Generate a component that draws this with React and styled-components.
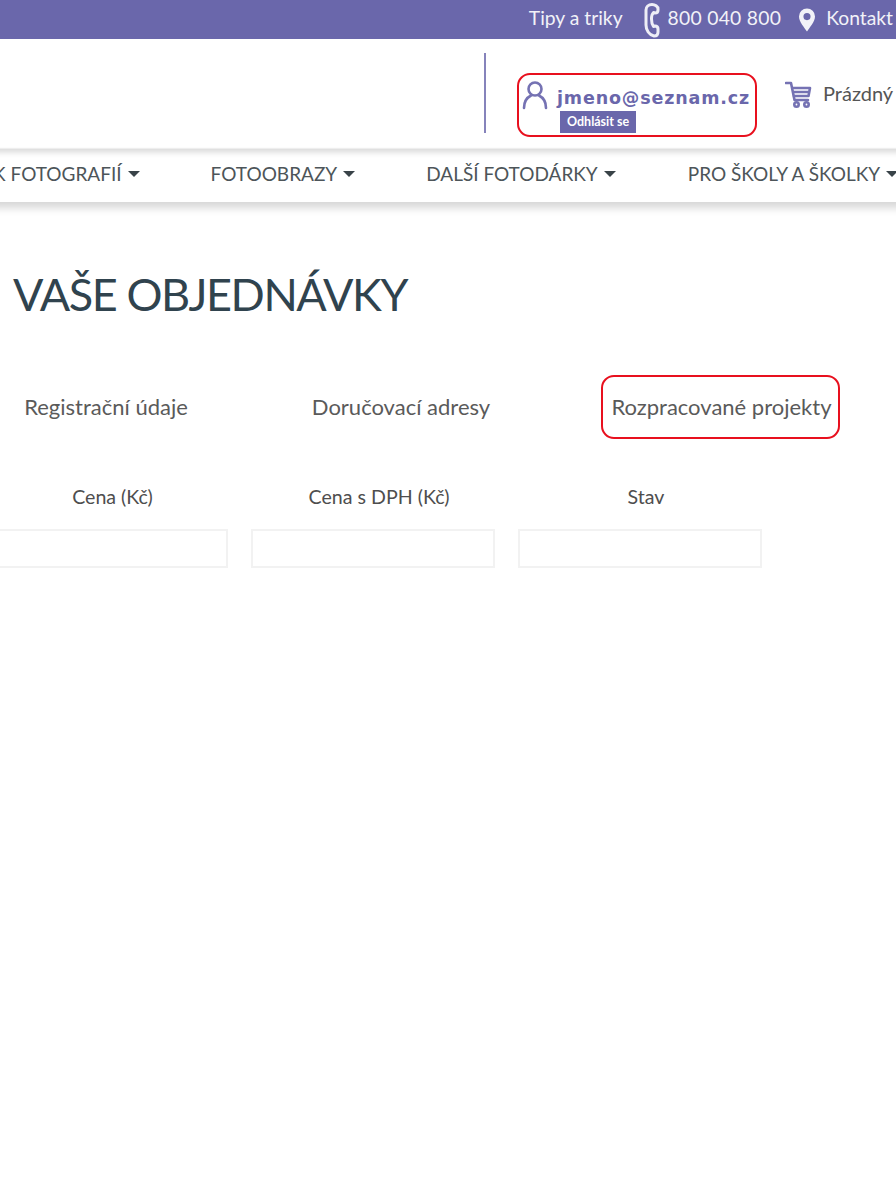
import React from "react";
import styled, { createGlobalStyle } from "styled-components";

const Global = createGlobalStyle`
  html, body { margin: 0; padding: 0; background: #fff; }
  body { font-family: "Lato", "Open Sans", sans-serif; overflow: hidden; height: 1202px; }
`;
const Page = styled.div`width: 896px; height: 1202px; overflow: hidden; background: #fff;`;
const TopBar = styled.div`
  height: 39px; background: #6a67ab; color: #f2f2f8; display: flex; align-items: center;
  justify-content: flex-end; padding-right: 3px; font-size: 19.3px; box-sizing: border-box;
`;
const TopItem = styled.span`display: flex; align-items: center; gap: ${p => p.$gap || 8}px; margin-left: ${p => p.$ml || 0}px;`;
const TopText = styled.span`padding-bottom: 5px; letter-spacing: ${p => p.$ls || 0}px;`;
const Header = styled.div`height: 109px; display: flex; justify-content: flex-end; padding-right: 4px; box-sizing: border-box;`;
const Divider = styled.div`width: 2px; height: 80px; margin-top: 14px; background: #8683bb; margin-right: 31px;`;
const Account = styled.div`
  width: 240px; height: 64px; margin-top: 34px; border: 2.5px solid #e8101e; border-radius: 13px; box-sizing: border-box;
  display: flex; flex-direction: column; padding: 5px 0 0 3px;
`;
const AccountTop = styled.div`display: flex; align-items: center; gap: 9px;`;
const Email = styled.span`font-family: "DejaVu Sans", sans-serif; font-weight: 700; font-size: 17.5px; letter-spacing: 0.85px; color: #6a67ab; margin-top: 6px; line-height: 22px;`;
const Logout = styled.span`
  align-self: flex-start; margin-left: 38px; margin-top: 1px; background: #6a67ab; color: #fff; font-size: 12.5px; font-weight: 700;
  padding: 0 7px; height: 22px; line-height: 22px;
`;
const Cart = styled.div`
  display: flex; align-items: flex-start; gap: 11px; margin: 42px 0 0 28px; font-size: 20px; color: #555; width: 107px; white-space: nowrap;
  svg { flex: none; }
`;
const Nav = styled.div`
  height: 53px; margin: 1px -20px 0; padding: 0 0 5px 20px; box-sizing: border-box; background: #fff; display: flex; align-items: center;
  box-shadow: inset 0 6px 6px -3px rgba(0,0,0,.16), 0 -1px 1px rgba(0,0,0,.06), 0 6px 8px rgba(0,0,0,.16);
  font-size: 19px; color: #4d5559; white-space: nowrap;
`;
const NavItem = styled.span`display: flex; align-items: center; gap: 6px; margin-left: ${p => p.$ml}px; flex: none;`;
const Caret = styled.i`width: 0; height: 0; border-left: 6px solid transparent; border-right: 6px solid transparent; border-top: 6px solid #394348; margin-top: 1px;`;
const Title = styled.h1`font-size: 45px; font-weight: 400; color: #30434e; margin: 64px 0 0 13px; line-height: 56px; letter-spacing: -1.4px;`;
const Tabs = styled.div`display: grid; grid-template-columns: 212px 378px 250px; margin-top: 53px; height: 64px; align-items: center; font-size: 22px; color: #5a5a5a;`;
const Tab = styled.div`display: flex; justify-content: center; padding-bottom: 2px;`;
const ActiveTab = styled.div`
  margin-left: 11px; width: 239px; height: 64px; border: 2.5px solid #e8101e; border-radius: 13px; box-sizing: border-box;
  display: flex; align-items: center; justify-content: center; padding: 0 0 2px 2px; white-space: nowrap;
`;
const Columns = styled.div`display: grid; grid-template-columns: 243px 244px 244px; column-gap: 23px; margin: 46px 0 0 -15px;`;
const Col = styled.div`display: flex; flex-direction: column; align-items: center; gap: 20px;`;
const Label = styled.div`font-size: 19.6px; color: #4e4e4e; line-height: 24px; padding-left: 12px;`;
const Input = styled.div`width: 100%; height: 39px; border: 2px solid #f2f2f2; box-sizing: border-box; background: #fff;`;

const Phone = () => (
  <svg width="16" height="36" viewBox="0 0 16 36" fill="none" stroke="#eeeef6" strokeWidth="3" strokeLinejoin="round">
    <path d="M8 2.500C4.500 2.500 2 5 2 8v15c0 5 3 10 8 11 2.500 0 4-1.500 4-4v-3c0-2-1.500-3-3-3l-1.500.5C8.500 23 7.500 20 7.500 17c0-3 .5-5 2-6.500l1.500.5c1.500 0 3-1 3-3V7c0-2.500-3-4.500-6-4.500z" />
  </svg>
);
const Pin = () => (
  <svg width="16" height="26" viewBox="0 0 18 26"><path fillRule="evenodd" fill="#f2f2f8" d="M9 0a9 9 0 0 1 9 9c0 6-6 12-9 17C6 21 0 15 0 9a9 9 0 0 1 9-9zm0 5.200a4 4 0 1 0 0 8 4 4 0 0 0 0-8z" /></svg>
);
const User = () => (
  <svg width="26" height="30" viewBox="0 0 26 30" fill="none" stroke="#7572b3" strokeWidth="2.600" strokeLinecap="round"><circle cx="13" cy="9" r="6.500" /><path d="M2 28c0-7 4-11 7-12.500M24 28c0-7-4-11-7-12.500" /></svg>
);
const CartIcon = () => (
  <svg width="27" height="27" viewBox="0 0 27 27" fill="none" stroke="#7572b3" strokeWidth="2.600" strokeLinejoin="round" strokeLinecap="round">
    <path d="M1 2h5l3.500 17H23" /><path d="M7.500 7H25l-1.500 8H9M8.500 11h15.500" /><circle cx="11.500" cy="23.500" r="2.200" /><circle cx="21.500" cy="23.500" r="2.200" />
  </svg>
);

export default function App() {
  return (
    <Page>
      <Global />
      <TopBar>
        <TopItem><TopText>Tipy a triky</TopText></TopItem>
        <TopItem $ml={21} $gap={8}><Phone /><TopText $ls={0.28}>800 040 800</TopText></TopItem>
        <TopItem $ml={18} $gap={11}><Pin /><TopText>Kontakt</TopText></TopItem>
      </TopBar>
      <Header>
        <Divider />
        <Account>
          <AccountTop><User /><Email>jmeno@seznam.cz</Email></AccountTop>
          <Logout>Odhlásit se</Logout>
        </Account>
        <Cart><CartIcon />Prázdný</Cart>
      </Header>
      <Nav>
        <NavItem $ml={-84}>NÁHLEDK FOTOGRAFIÍ <Caret /></NavItem>
        <NavItem $ml={71}>FOTOOBRAZY <Caret /></NavItem>
        <NavItem $ml={71}>DALŠÍ FOTODÁRKY <Caret /></NavItem>
        <NavItem $ml={72}>PRO ŠKOLY A ŠKOLKY <Caret /></NavItem>
      </Nav>
      <Title>VAŠE OBJEDNÁVKY</Title>
      <Tabs>
        <Tab>Registrační údaje</Tab>
        <Tab>Doručovací adresy</Tab>
        <ActiveTab>Rozpracované projekty</ActiveTab>
      </Tabs>
      <Columns>
        <Col><Label>Cena (Kč)</Label><Input /></Col>
        <Col><Label>Cena s DPH (Kč)</Label><Input /></Col>
        <Col><Label>Stav</Label><Input /></Col>
      </Columns>
    </Page>
  );
}
